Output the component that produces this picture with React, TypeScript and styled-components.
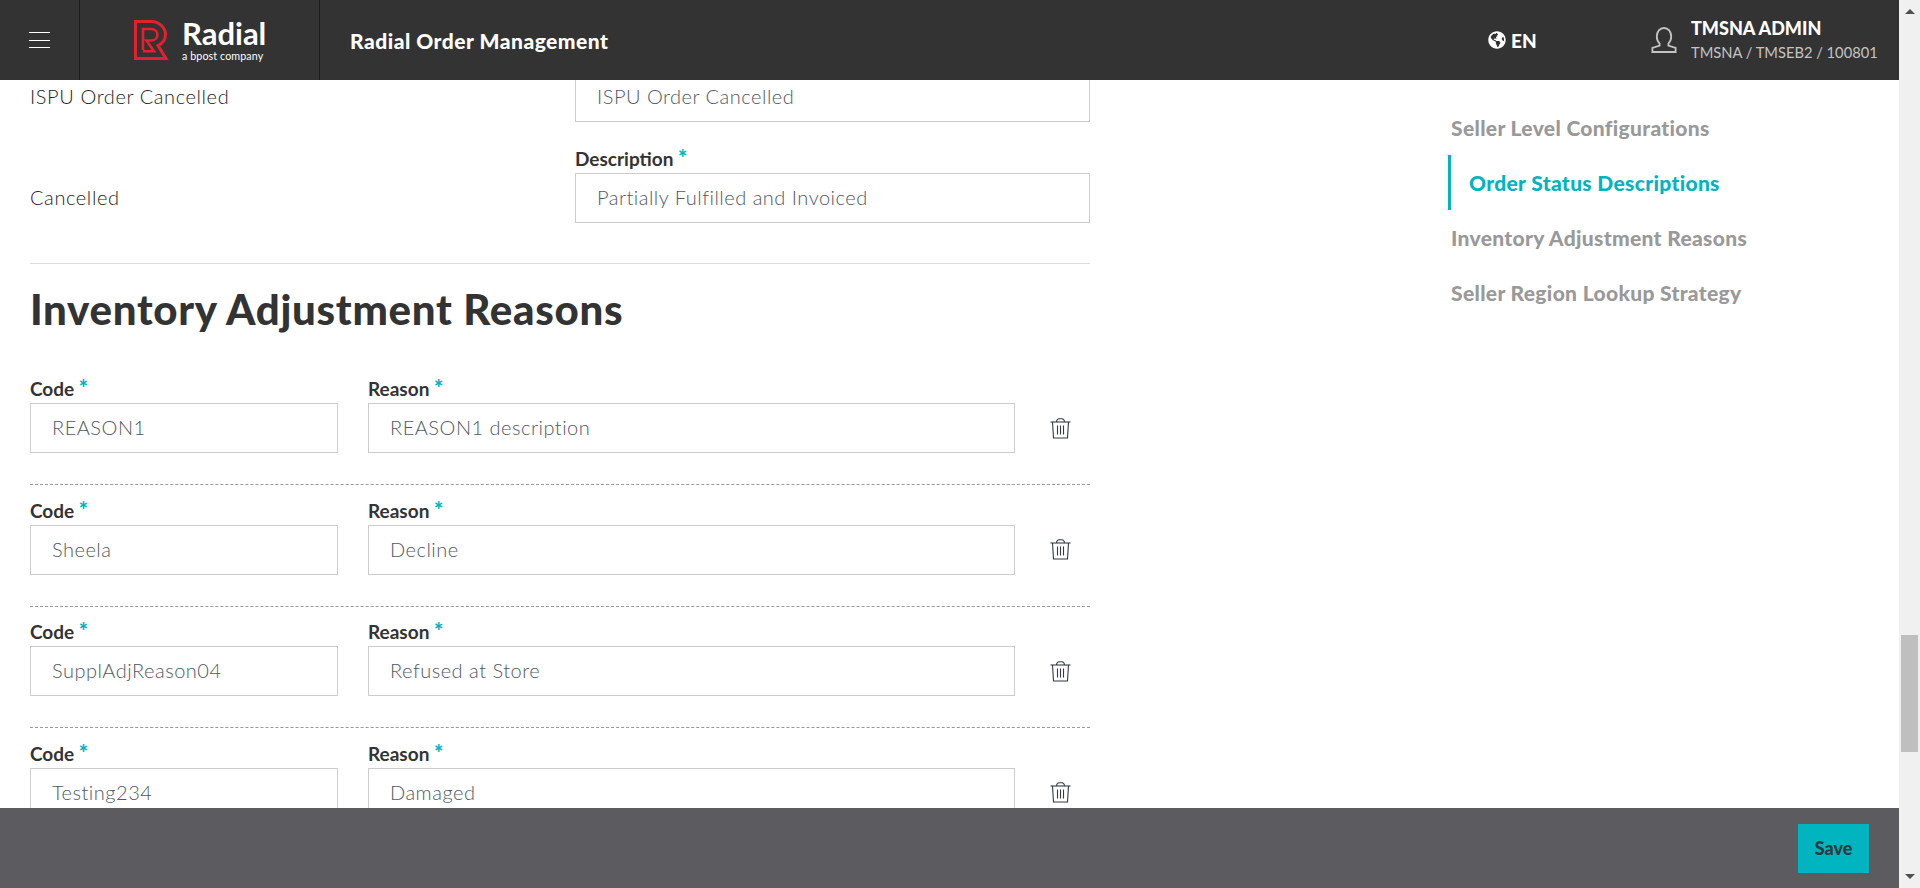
import React from 'react'
import styled, { createGlobalStyle } from 'styled-components'
import { FaGlobeAmericas } from 'react-icons/fa'

const reasons = [
    { code: 'REASON1', reason: 'REASON1 description' },
    { code: 'Sheela', reason: 'Decline' },
    { code: 'SupplAdjReason04', reason: 'Refused at Store' },
    { code: 'Testing234', reason: 'Damaged' },
]

const navItems = [
    { label: 'Seller Level Configurations', active: false },
    { label: 'Order Status Descriptions', active: true },
    { label: 'Inventory Adjustment Reasons', active: false },
    { label: 'Seller Region Lookup Strategy', active: false },
]

function RadialMark() {
    return (
        <svg width="35" height="40" viewBox="0 0 35 40" fill="none" stroke="#e5202e" strokeWidth="3">
            <path d="M1.5 1.5H17C25 1.5 31.5 7.5 31.5 14.5C31.5 19.5 28.5 23.5 24 25.6L32 38.5H1.5Z" />
            <path d="M9 30V9H17C20.8 9 23.4 11.5 23.4 14.7C23.4 18 20.8 20.5 17 20.5H12.5L20 31.2H9" strokeWidth="2.6" />
        </svg>
    )
}

function TrashIcon() {
    return (
        <svg width="21" height="21" viewBox="0 0 21 21" fill="none" stroke="#333a45" strokeWidth="1.1">
            <path d="M0.5 4H20.5" />
            <path d="M6.5 4C6.5 2 8 0.7 9 0.7H12C13 0.7 14.5 2 14.5 4" />
            <path d="M2.5 4L3.5 20H17.5L18.5 4" />
            <path d="M7.5 7.5V16.5M10.5 7.5V16.5M13.5 7.5V16.5" />
        </svg>
    )
}

function UserIcon() {
    return (
        <svg width="26" height="26" viewBox="0 0 26 26" fill="none" stroke="#c4c4c4" strokeWidth="1.8">
            <path d="M8.6 16.6C6.8 14.8 5.8 12.4 5.8 9.6C5.8 4.6 8.8 1 13 1C17.2 1 20.2 4.6 20.2 9.6C20.2 12.4 19.2 14.8 17.4 16.6V18.6L24.6 21V25H1.4V21L8.6 18.6Z" />
        </svg>
    )
}

function App() {
    return (
        <Page>
            <GlobalStyle />
            <Column>
                <Header>
                    <MenuCell>
                        <Burger>
                            <span />
                            <span />
                            <span />
                        </Burger>
                    </MenuCell>
                    <LogoCell>
                        <RadialMark />
                        <LogoText>
                            <LogoName>Radial</LogoName>
                            <LogoTag>a bpost company</LogoTag>
                        </LogoText>
                    </LogoCell>
                    <AppTitle>Radial Order Management</AppTitle>
                    <Language>
                        <FaGlobeAmericas size={18} />
                        EN
                    </Language>
                    <UserBlock>
                        <UserIcon />
                        <UserText>
                            <UserName>TMSNA ADMIN</UserName>
                            <UserPath>TMSNA / TMSEB2 / 100801</UserPath>
                        </UserText>
                    </UserBlock>
                </Header>
                <Body>
                    <Content>
                        <FirstStatusRow>
                            <StatusName>ISPU Order Cancelled</StatusName>
                            <Input>ISPU Order Cancelled</Input>
                        </FirstStatusRow>
                        <StatusRow>
                            <StatusName>Cancelled</StatusName>
                            <Field>
                                <Label>
                                    Description <Star>*</Star>
                                </Label>
                                <Input>Partially Fulfilled and Invoiced</Input>
                            </Field>
                        </StatusRow>
                        <Rule />
                        <Heading>Inventory Adjustment Reasons</Heading>
                        {reasons.map(({ code, reason }) => (
                            <ReasonRow key={code}>
                                <Field>
                                    <Label>
                                        Code <Star>*</Star>
                                    </Label>
                                    <Input>{code}</Input>
                                </Field>
                                <Field>
                                    <Label>
                                        Reason <Star>*</Star>
                                    </Label>
                                    <Input>{reason}</Input>
                                </Field>
                                <TrashButton>
                                    <TrashIcon />
                                </TrashButton>
                            </ReasonRow>
                        ))}
                    </Content>
                    <SideNav>
                        {navItems.map(({ label, active }) => (
                            <NavItem key={label} $active={active}>
                                {label}
                            </NavItem>
                        ))}
                    </SideNav>
                </Body>
                <Footer>
                    <SaveButton>Save</SaveButton>
                </Footer>
            </Column>
            <ScrollTrack>
                <ArrowUp />
                <Thumb />
                <ArrowDown />
            </ScrollTrack>
        </Page>
    )
}

const GlobalStyle = createGlobalStyle`
    html, body {
        margin: 0;
        height: 100%;
        overflow: hidden;
        background: #fff;
    }
    * {
        box-sizing: border-box;
    }
`

const Page = styled.div`
    display: flex;
    width: 1920px;
    height: 888px;
    font-family: Lato, 'Noto Sans', sans-serif;
    color: #333;
`

const Column = styled.div`
    display: flex;
    flex-direction: column;
    width: 1899px;
    height: 100%;
`

const Header = styled.header`
    display: flex;
    align-items: center;
    flex: none;
    height: 80px;
    background: #333;
    color: #fff;
`

const MenuCell = styled.div`
    display: flex;
    align-items: center;
    justify-content: center;
    width: 80px;
    height: 100%;
    border-right: 1px solid #1c1c1c;
`

const Burger = styled.div`
    display: flex;
    flex-direction: column;
    gap: 6.5px;
    width: 21px;

    span {
        display: block;
        height: 1px;
        background: #fff;
    }
`

const LogoCell = styled.div`
    display: flex;
    align-items: center;
    gap: 13px;
    width: 240px;
    height: 100%;
    padding-left: 54px;
    border-right: 1px solid #1c1c1c;
`

const LogoText = styled.div`
    display: flex;
    flex-direction: column;
`

const LogoName = styled.span`
    font-size: 31px;
    font-weight: 700;
    line-height: 28px;
`

const LogoTag = styled.span`
    font-size: 10.7px;
    line-height: 13px;
    margin-top: 2px;
    letter-spacing: 0.1px;
`

const AppTitle = styled.div`
    width: 258px;
    margin-left: 30px;
    font-size: 21px;
    font-weight: 900;
    letter-spacing: 0.5px;
    white-space: nowrap;
`

const Language = styled.div`
    display: flex;
    align-items: center;
    gap: 5px;
    width: 163px;
    margin-left: 880px;
    font-size: 19px;
    font-weight: 900;
`

const UserBlock = styled.div`
    display: flex;
    align-items: center;
    gap: 14px;
`

const UserText = styled.div`
    display: flex;
    flex-direction: column;
    gap: 4px;
`

const UserName = styled.span`
    font-size: 18px;
    font-weight: 900;
    line-height: 20px;
`

const UserPath = styled.span`
    font-size: 14.7px;
    line-height: 20px;
    color: #c4c4c4;
`

const Body = styled.main`
    display: flex;
    flex: 1;
    min-height: 0;
    overflow: hidden;
`

const Content = styled.section`
    flex: none;
    width: 1060px;
    margin-left: 30px;
`

const StatusRow = styled.div`
    display: grid;
    grid-template-columns: 545px 515px;
    align-items: end;
    margin-top: 25px;
`

const FirstStatusRow = styled(StatusRow)`
    margin-top: -8px;
`

const StatusName = styled.div`
    height: 50px;
    color: #222;
    font-size: 20px;
    font-weight: 300;
    line-height: 48px;
    letter-spacing: 0.6px;
`

const Field = styled.div`
    display: flex;
    flex-direction: column;
    gap: 4px;
`

const Label = styled.label`
    display: block;
    height: 22px;
    font-size: 19px;
    font-weight: 700;
    line-height: 24px;
`

const Star = styled.span`
    color: #00b4c0;
    font-size: 22px;
    font-weight: 900;
    line-height: 0;
`

const Input = styled.div`
    height: 50px;
    padding-left: 21px;
    border: 1px solid #ccc;
    background: #fff;
    color: #4f5863;
    font-size: 20px;
    font-weight: 300;
    line-height: 46px;
    letter-spacing: 0.5px;
`

const Rule = styled.hr`
    margin: 40px 0 0;
    border: 0;
    border-top: 1px solid #ddd;
`

const Heading = styled.h2`
    margin: 22px 0 45px;
    font-size: 42px;
    font-weight: 900;
    line-height: 46px;
    letter-spacing: 0.7px;
    color: #333;
`

const ReasonRow = styled.div`
    display: grid;
    grid-template-columns: 308px 647px 1fr;
    column-gap: 30px;
    align-items: end;
    padding-bottom: 31px;
    margin-bottom: 13.6px;
    border-bottom: 1px dashed #999;
`

const TrashButton = styled.div`
    display: flex;
    align-items: center;
    height: 50px;
    padding-left: 5px;
`

const SideNav = styled.nav`
    display: flex;
    flex-direction: column;
    margin: 20px 0 0 358px;
`

const NavItem = styled.a<{ $active: boolean }>`
    display: flex;
    align-items: center;
    height: 55px;
    padding-left: ${(p) => (p.$active ? '18px' : '0')};
    border-left: 3px solid ${(p) => (p.$active ? '#00b4c0' : 'transparent')};
    color: ${(p) => (p.$active ? '#00b4c0' : '#999')};
    font-size: 21px;
    font-weight: 900;
    letter-spacing: 0.33px;
    white-space: nowrap;
`

const Footer = styled.footer`
    display: flex;
    align-items: center;
    justify-content: flex-end;
    flex: none;
    height: 80px;
    padding-right: 30px;
    background: #5c5b60;
`

const SaveButton = styled.button`
    width: 71px;
    height: 49px;
    border: 0;
    background: #00b4c0;
    color: #2d3a40;
    font-family: inherit;
    font-size: 18px;
    font-weight: 900;
`

const ScrollTrack = styled.div`
    position: relative;
    flex: none;
    width: 21px;
    height: 100%;
    background: #f0f0f0;
`

const Thumb = styled.div`
    position: absolute;
    top: 635px;
    left: 2px;
    width: 17px;
    height: 117px;
    background: #bfbfbf;
`

const ArrowUp = styled.div`
    position: absolute;
    top: 9px;
    left: 6px;
    border-left: 5px solid transparent;
    border-right: 5px solid transparent;
    border-bottom: 5px solid #505050;
`

const ArrowDown = styled.div`
    position: absolute;
    bottom: 9px;
    left: 6px;
    border-left: 5px solid transparent;
    border-right: 5px solid transparent;
    border-top: 5px solid #505050;
`

export default App
